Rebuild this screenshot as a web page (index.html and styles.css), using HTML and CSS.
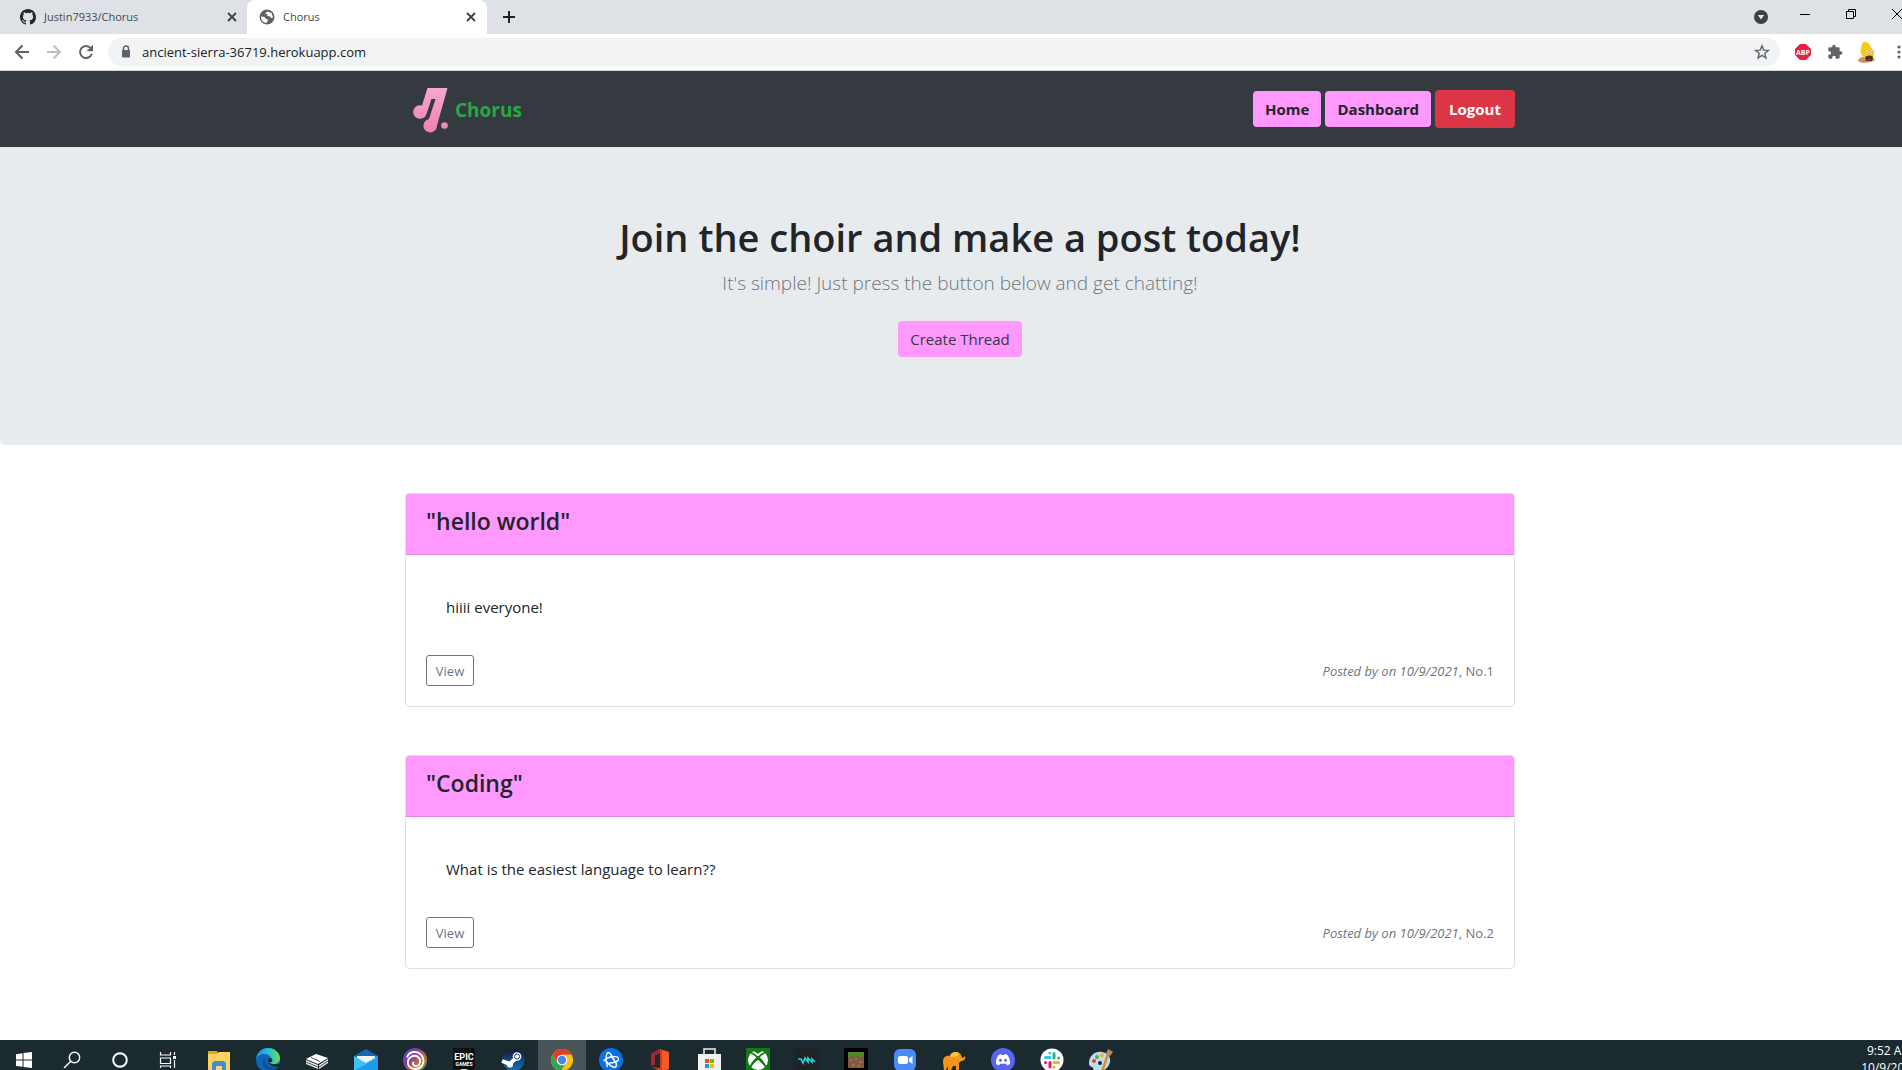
FILE: index.html
```html
<!DOCTYPE html>
<html lang="en">
<head>
<meta charset="utf-8">
<title>Chorus</title>
<link rel="stylesheet" href="styles.css">
</head>
<body>
<div class="screen">
  <div class="tabstrip">
    <div class="tab">
      <svg class="favicon" viewBox="0 0 16 16" fill="#24292e"><path d="M8 0C3.58 0 0 3.58 0 8c0 3.54 2.29 6.53 5.47 7.59.4.07.55-.17.55-.38 0-.19-.01-.82-.01-1.49-2.01.37-2.53-.49-2.69-.94-.09-.23-.48-.94-.82-1.13-.28-.15-.68-.52-.01-.53.63-.01 1.08.58 1.23.82.72 1.21 1.87.87 2.33.66.07-.52.28-.87.51-1.07-1.78-.2-3.64-.89-3.64-3.95 0-.87.31-1.59.82-2.15-.08-.2-.36-1.02.08-2.12 0 0 .67-.21 2.2.82a7.6 7.6 0 0 1 4 0c1.53-1.04 2.2-.82 2.2-.82.44 1.1.16 1.92.08 2.12.51.56.82 1.27.82 2.15 0 3.07-1.87 3.75-3.65 3.95.29.25.54.73.54 1.48 0 1.07-.01 1.93-.01 2.2 0 .21.15.46.55.38A8.01 8.01 0 0 0 16 8c0-4.42-3.58-8-8-8z"/></svg>
      <span class="tab-title">Justin7933/Chorus</span>
      <button class="icon-btn" aria-label="Close tab"><svg width="10" height="10" viewBox="0 0 10 10"><path d="M1 1l8 8M9 1L1 9" stroke="#3c4043" stroke-width="1.8"/></svg></button>
    </div>
    <div class="tab tab-active">
      <svg class="favicon" viewBox="0 0 16 16"><circle cx="8" cy="8" r="7.500" fill="#5f6368"/><path d="M8.500 2.500l4 1.500 1.500 4.500-2 .5-1-1.500-2.500-.5-.5-2-2-.5z" fill="#fff"/><path d="M2 7.500l3.500.5 1.500 2 2 .5-.5 2L7 14C4 13.500 2 11 2 7.500z" fill="#fff"/></svg>
      <span class="tab-title">Chorus</span>
      <button class="icon-btn" aria-label="Close tab"><svg width="10" height="10" viewBox="0 0 10 10"><path d="M1 1l8 8M9 1L1 9" stroke="#3c4043" stroke-width="1.8"/></svg></button>
    </div>
    <button class="icon-btn new-tab" aria-label="New tab"><svg width="12" height="12" viewBox="0 0 12 12"><path d="M6 0v12M0 6h12" stroke="#202124" stroke-width="2"/></svg></button>
    <div class="window-controls">
      <button class="icon-btn" aria-label="Search tabs"><svg width="14" height="14" viewBox="0 0 14 14"><circle cx="7" cy="7" r="7" fill="#3c4043"/><path d="M3.800 5h6.400L7 9.500z" fill="#e8eaed"/></svg></button>
      <button class="icon-btn" aria-label="Minimize"><svg width="10" height="10" viewBox="0 0 10 10"><path d="M0 5.500h10" stroke="#000"/></svg></button>
      <button class="icon-btn" aria-label="Restore"><svg width="10" height="10" viewBox="0 0 10 10" fill="none" stroke="#000"><path d="M.5 2.500h7v7h-7zM2.500 2.500v-2h7v7h-2"/></svg></button>
      <button class="icon-btn" aria-label="Close window"><svg width="10" height="10" viewBox="0 0 10 10"><path d="M0 0l10 10M10 0L0 10" stroke="#000"/></svg></button>
    </div>
  </div>

  <div class="toolbar">
    <button class="icon-btn" aria-label="Back"><svg width="16" height="16" viewBox="0 0 16 16" fill="none" stroke="#5f6368" stroke-width="2"><path d="M15 8H2M8.500 1.500L2 8l6.500 6.500"/></svg></button>
    <button class="icon-btn" aria-label="Forward"><svg width="16" height="16" viewBox="0 0 16 16" fill="none" stroke="#bdbec0" stroke-width="2"><path d="M1 8h13M7.500 1.500L14 8l-6.500 6.500"/></svg></button>
    <button class="icon-btn" aria-label="Reload"><svg width="16" height="16" viewBox="0 0 16 16"><path d="M13.800 9.700A6 6 0 1 1 12.700 4.200" fill="none" stroke="#5f6368" stroke-width="2"/><path d="M15 .8v6.400H8.600z" fill="#5f6368"/></svg></button>
    <div class="omnibox">
      <svg width="10" height="14" viewBox="0 0 10 14"><path d="M2.500 6V3.500a2.500 2.500 0 0 1 5 0V6" fill="none" stroke="#5f6368" stroke-width="1.500"/><rect x="1" y="5" width="8" height="7.500" rx="1" fill="#5f6368"/></svg>
      <input class="address" type="text" aria-label="Address" value="ancient-sierra-36719.herokuapp.com">
      <button class="icon-btn" aria-label="Bookmark"><svg width="16" height="16" viewBox="0 0 16 16"><path d="M8 1.800l1.700 4.300 4.700.3-3.600 3 1.200 4.600L8 11.400 4 14l1.200-4.600-3.600-3 4.700-.3z" fill="none" stroke="#5f6368" stroke-width="1.400"/></svg></button>
    </div>
    <div class="extensions">
      <button class="icon-btn" aria-label="Adblock Plus"><svg width="16" height="16" viewBox="0 0 16 16"><path d="M5 0h6l5 5v6l-5 5H5l-5-5V5z" fill="#ed1e45"/><text x="8" y="10.600" class="abp" text-anchor="middle">ABP</text></svg></button>
      <button class="icon-btn" aria-label="Extensions"><svg width="16" height="16" viewBox="0 0 24 24"><path d="M20.500 11H19V7a2 2 0 0 0-2-2h-4V3.500a2.500 2.500 0 0 0-5 0V5H4a2 2 0 0 0-2 2v3.800h1.500a2.700 2.700 0 0 1 0 5.400H2V20a2 2 0 0 0 2 2h3.800v-1.500a2.700 2.700 0 0 1 5.400 0V22H17a2 2 0 0 0 2-2v-4h1.500a2.500 2.500 0 0 0 0-5z" fill="#5f6368"/></svg></button>
      <button class="icon-btn" aria-label="Profile"><svg width="20" height="22" viewBox="0 0 20 22"><path d="M1 20c1-4 4-4 8-4s8 0 9 3c-4 3-14 4-17 1z" fill="#c98b6b"/><path d="M5 3c1-3 5-3 7 0l3 5c2 1 3 3 2 5l-1 3c-1 4-7 4-9 1l-3-4c-1-3 0-7 1-10z" fill="#fcc916"/><circle cx="10" cy="11" r="2.200" fill="#fff8c8" stroke="#b89a20" stroke-width=".5"/><circle cx="15" cy="11" r="2.200" fill="#fff8c8" stroke="#b89a20" stroke-width=".5"/><circle cx="10" cy="11" r=".6"/><circle cx="15" cy="11" r=".6"/><path d="M8 16c3-2 6-2 8 0l-1 4H9z" fill="#4a2c14"/><path d="M10 18h4v1.500h-4z" fill="#e02020"/></svg></button>
      <button class="icon-btn" aria-label="Menu"><svg width="4" height="14" viewBox="0 0 4 14" fill="#5f6368"><circle cx="2" cy="2" r="1.600"/><circle cx="2" cy="7" r="1.600"/><circle cx="2" cy="12" r="1.600"/></svg></button>
    </div>
  </div>

  <div class="page">
    <header class="navbar">
      <div class="container navbar-inner">
        <a class="brand" href="#">
          <svg width="38" height="46" viewBox="0 0 38 46"><defs><linearGradient id="note" x1="0" y1="0" x2="0" y2="1"><stop offset="0" stop-color="#f7a9cb"/><stop offset="1" stop-color="#f17fb4"/></linearGradient></defs><path d="M15.500 1H35.500L25 38.500A6.800 6.800 0 1 1 17 32.100L23.500 12H19.500L14.300 27.500A6.800 6.800 0 1 1 7.500 18.200L10 18.400z" fill="url(#note)"/><circle cx="32.500" cy="38.500" r="3.300" fill="#f48bbb"/></svg>
          <span>Chorus</span>
        </a>
        <nav class="nav-links">
          <a class="btn btn-pink" href="#">Home</a>
          <a class="btn btn-pink" href="#">Dashboard</a>
          <button class="btn btn-danger">Logout</button>
        </nav>
      </div>
    </header>

    <section class="hero">
      <h1>Join the choir and make a post today!</h1>
      <p>It's simple! Just press the button below and get chatting!</p>
      <button class="btn btn-create">Create Thread</button>
    </section>

    <main class="container posts">
      <article class="card">
        <h2>"hello world"</h2>
        <div class="card-body">
          <p class="card-text">hiiii everyone!</p>
          <div class="card-foot">
            <button class="btn-view">View</button>
            <small><em>Posted by on 10/9/2021</em>, No.1</small>
          </div>
        </div>
      </article>
      <article class="card">
        <h2>"Coding"</h2>
        <div class="card-body">
          <p class="card-text">What is the easiest language to learn??</p>
          <div class="card-foot">
            <button class="btn-view">View</button>
            <small><em>Posted by on 10/9/2021</em>, No.2</small>
          </div>
        </div>
      </article>
    </main>
  </div>

  <footer class="taskbar">
    <div class="system-apps">
      <button class="app" aria-label="Start"><svg viewBox="0 0 24 24" fill="#fff"><path d="M4 6.300l6.500-1v6.300H4zM11.500 5.100L20 4v7.600h-8.500zM4 12.600h6.500v6.200L4 17.900zM11.500 12.600H20V20l-8.500-1z"/></svg></button>
      <button class="app" aria-label="Search"><svg viewBox="0 0 24 24" fill="none" stroke="#fff" stroke-width="1.400"><circle cx="14.500" cy="9.500" r="5.200"/><path d="M10.800 13.200L4 20"/></svg></button>
      <button class="app" aria-label="Cortana"><svg viewBox="0 0 24 24" fill="none" stroke="#fff" stroke-width="2"><circle cx="12" cy="12" r="6.800"/></svg></button>
      <button class="app" aria-label="Task view"><svg viewBox="0 0 24 24" fill="none" stroke="#fff" stroke-width="1.200"><path d="M4.500 4v3h10V4M4.500 10h10v5.500h-10zM4.500 20v-2h10v2M18.500 4v3M18.500 12v8"/><path d="M17 8h3v3h-3z" fill="#fff" stroke="none"/></svg></button>
    </div>
    <div class="pinned-apps">
      <button class="app" aria-label="File Explorer"><svg viewBox="0 0 24 24"><path d="M1 3h9l1 2h12v17H1z" fill="#e6a50c"/><path d="M1 6h9l2-2h11v18H1z" fill="#ffd45e"/><path d="M5 22v-7l2-2h10l2 2v7h-4v-4H9v4z" fill="#3a8fd6"/></svg></button>
      <button class="app" aria-label="Edge"><svg viewBox="0 0 24 24"><defs><linearGradient id="edge"><stop offset="0" stop-color="#1b8fdc"/><stop offset=".55" stop-color="#2bc3d2"/><stop offset="1" stop-color="#6bdc50"/></linearGradient></defs><circle cx="12" cy="12" r="12" fill="#0f65b8"/><path d="M0 11C1 4 6 0 12 0c7 0 12 5 12 10 0 4-3 6-6 6-4 0-4-1-4-2 1-1 1-2 1-3 0-3-3-5-6-5-4 0-8 2-9 5z" fill="url(#edge)"/><path d="M9 9c-4 3-3 12 5 14 4 0 7-2 9-5-5 3-14 1-14-9z" fill="#154f9f"/><path d="M14 14c0 2 2 2 4 2h6v2c-4 2-11 0-12-5 0-2 1-3 2-3 2 0 3 2 2 4z" fill="#1b2a2f"/></svg></button>
      <button class="app" aria-label="3D app"><svg viewBox="0 0 24 24"><path d="M1 11l10-5 12 4-10 6z" fill="#fff"/><path d="M1 12l12 5v4L1 16zM14 17l9-6v4l-9 6z" fill="#e8eaea"/><path d="M6 9.500l9 4M1 14l12 5M14 19l9-6" stroke="#1b2a2f" fill="none" stroke-width=".8"/></svg></button>
      <button class="app" aria-label="Mail"><svg viewBox="0 0 24 24"><path d="M0 8l12-7 12 7v4H0z" fill="#1467b8"/><path d="M3 8h18v8H3z" fill="#f2f4f5"/><path d="M0 8l12 7 12-7v15H0z" fill="#3ec2f4"/><path d="M0 23L24 9v14z" fill="#1d9ae8"/></svg></button>
      <button class="app" aria-label="Ubisoft Connect"><svg viewBox="0 0 24 24"><defs><linearGradient id="ubi" x2="1" y2="1"><stop offset="0" stop-color="#3f5fd0"/><stop offset=".35" stop-color="#813b9b"/><stop offset=".65" stop-color="#c76f36"/><stop offset="1" stop-color="#34a872"/></linearGradient></defs><circle cx="12" cy="12" r="12" fill="url(#ubi)"/><g fill="none" stroke="#fff" stroke-width="1.900"><path d="M4 9.500C6 3 15 2 19 8c4 7-1 13-7 13-5 0-8-4-7-8s6-7 10-4 2 9-2 9c-3 0-4-3-2-4"/></g></svg></button>
      <button class="app" aria-label="Epic Games"><svg viewBox="0 0 24 24"><path d="M1 0h22v21l-11 4-11-4z" fill="#111"/><text x="12" y="12" class="epic" text-anchor="middle">EPIC</text><text x="12" y="18" class="epic-sub" text-anchor="middle">GAMES</text><path d="M8 21h8l-4 2z" fill="#ddd"/></svg></button>
      <button class="app" aria-label="Steam"><svg viewBox="0 0 24 24"><defs><linearGradient id="steam" x2="0" y2="1"><stop offset="0" stop-color="#13183c"/><stop offset="1" stop-color="#1277b8"/></linearGradient></defs><circle cx="12.500" cy="12" r="11" fill="url(#steam)"/><path d="M1 13l8 3 6-6" stroke="#fff" stroke-width="4" fill="none"/><circle cx="16" cy="8.500" r="4.300" fill="#fff"/><circle cx="16" cy="8.500" r="2.600" fill="none" stroke="#1a3768"/><circle cx="9" cy="16.500" r="3" fill="#fff"/></svg></button>
      <button class="app app-current" aria-label="Chrome"><svg viewBox="0 0 24 24"><circle cx="12" cy="12" r="11" fill="#fbc116"/><path d="M12 12L2.500 6.500A11 11 0 0 1 21.500 6.500H12z" fill="#e33b2e"/><path d="M2.500 6.500A11 11 0 0 0 11 23l5-8.700-8.700.6z" fill="#2da94f"/><path d="M2.500 6.500L7 14.500 12 7h9.800z" fill="#e33b2e"/><circle cx="12" cy="12" r="5.300" fill="#fff"/><circle cx="12" cy="12" r="4.200" fill="#4285f4"/></svg></button>
      <button class="app" aria-label="Battle.net"><svg viewBox="0 0 24 24"><circle cx="12" cy="12" r="12" fill="#0a72e8"/><g fill="none" stroke="#fff" stroke-width="1.400"><path d="M8.500 19C6 13 7 4 9.500 4.500S15 11 16 15"/><path d="M4.500 13C9 8 19 7.500 19.500 10.500S15 15 10 15"/><path d="M11 8c4 3 8 8 6 10.500S10 17 7 13"/></g></svg></button>
      <button class="app" aria-label="Office"><svg viewBox="0 0 24 24"><path d="M3 6l9-5 9 3v17l-9 2-9-4 9 1V5L7 7v9l-4 2z" fill="#d83b18"/><path d="M3 6l9-5v4L7 7v9l-4 2z" fill="#a92236"/><path d="M14 2l7 2v17l-7 2z" fill="#f35b24"/></svg></button>
      <button class="app" aria-label="Microsoft Store"><svg viewBox="0 0 24 24"><path d="M7 8V1h11v7" fill="none" stroke="#f2f2f2" stroke-width="1.500"/><path d="M1 6h23v18H1z" fill="#f2f2f2"/><path d="M8 11h4v4H8z" fill="#f25022"/><path d="M13 11h4v4h-4z" fill="#7fba00"/><path d="M8 16h4v4H8z" fill="#00a4ef"/><path d="M13 16h4v4h-4z" fill="#ffb900"/></svg></button>
      <button class="app" aria-label="Xbox"><svg viewBox="0 0 24 24"><path d="M0 0h24v24H0z" fill="#107c10"/><circle cx="12" cy="12" r="10" fill="#fff"/><path d="M6 3c3 0 6 3 6 3s3-3 6-3c-4-2-8-2-12 0zM4 19c1-6 8-11 8-11s7 5 8 11c-1-1-5-5-8-7-3 2-7 6-8 7z" fill="#107c10"/><path d="M5 4.500c4 2 12 9 15 15M19 4.500c-4 2-12 9-15 15" fill="none" stroke="#107c10" stroke-width="1.800"/></svg></button>
      <button class="app" aria-label="Voicemod"><svg viewBox="0 0 24 24"><path d="M0 0h24v24H0z" fill="#202226"/><path d="M3 11h3l2 4 2-5 3 4v-4l4 4v-3l3 3" fill="none" stroke="#23d3d7" stroke-width="1.700"/></svg></button>
      <button class="app" aria-label="Minecraft"><svg viewBox="0 0 24 24"><path d="M0 0h24v24H0z"/><path d="M4 4h16v16H4z" fill="#805a3e"/><path d="M4 4h16v4h-2v1h-3V7h-2v2H9V7H7v2H4z" fill="#4f8a2e"/><path d="M6 11h2v2H6zM11 10h2v2h-2zM15 13h3v2h-3zM8 16h3v2H8zM14 17h2v2h-2z" fill="#a2734e"/></svg></button>
      <button class="app" aria-label="Zoom"><svg viewBox="0 0 24 24"><rect x="1" y="1" width="22" height="22" rx="6" fill="#4a8cf7"/><rect x="5" y="8" width="10" height="8" rx="2" fill="#fff"/><path d="M16 10.500L19.500 8v8L16 13.500z" fill="#fff"/></svg></button>
      <button class="app" aria-label="Elephant app"><svg viewBox="0 0 24 24"><path d="M1 14c0-5 3-7 7-6 1-4 6-5 9-3 3 1 2 5 4 5l2-2c1 3-1 5-4 5l-2 2v7h-3v-4h-3l-2 4H6v-4l-2 4H2z" fill="#f7941d"/><path d="M8 8c1-4 6-5 9-3-1 4-5 6-9 3z" fill="#ffc233"/></svg></button>
      <button class="app" aria-label="Discord"><svg viewBox="0 0 24 24"><circle cx="12" cy="12" r="12" fill="#5865f2"/><path d="M7.500 7l2.500-1 .7 1h2.600l.7-1 2.500 1c2 3 3 6 2.500 9l-3 1.500-1-1.700H9l-1 1.700L5 16c-.5-3 .5-6 2.500-9z" fill="#fff"/><circle cx="9.500" cy="12.300" r="1.500" fill="#5865f2"/><circle cx="14.500" cy="12.300" r="1.500" fill="#5865f2"/></svg></button>
      <button class="app" aria-label="Slack"><svg viewBox="0 0 24 24"><circle cx="12" cy="12" r="11.500" fill="#fff"/><g stroke-width="3" stroke-linecap="round"><path d="M5.500 9.500H10M9.800 5v.1" stroke="#36c5f0"/><path d="M14 5.500V10M18.500 10h.1" stroke="#2eb67d"/><path d="M14 14.500h4.500M14 19v-.1" stroke="#ecb22e"/><path d="M10 14.500V19M5.500 14.500h.1" stroke="#e01e5a"/></g></svg></button>
      <button class="app" aria-label="Paint"><svg viewBox="0 0 24 24"><path d="M0 15C0 8 6 3 13 4c6 1 9 5 8 10-1 6-8 11-14 10-3 0-2-4-4-5s-3-1-3-4z" fill="#bcdcf0"/><circle cx="5" cy="13" r="2" fill="#d9472b"/><circle cx="8" cy="9" r="2" fill="#4fae4a"/><circle cx="13" cy="7.500" r="2" fill="#f2b632"/><circle cx="11" cy="15" r="2" fill="#1b2a2f"/><path d="M13 24L19 6" stroke="#e58a2b" stroke-width="2.500"/><path d="M17 6l2-5 5 3-3 4z" fill="#b78b62"/></svg></button>
    </div>
    <div class="clock"><span>9:52 AM</span><span>10/9/2021</span></div>
  </footer>
</div>
</body>
</html>
```
FILE: styles.css
```css
* { box-sizing: border-box; }

body {
  margin: 0;
  overflow: hidden;
  background: #fff;
  color: #212529;
  font-family: "Open Sans", "Noto Sans", sans-serif;
  font-size: 15px;
  line-height: 24px;
}

button, input { font: inherit; color: inherit; }

/* The desktop runs slightly past the right and bottom of the window */
.screen {
  display: flex;
  flex-direction: column;
  height: calc(100vh + 10px);
  margin-right: -18px;
}

.icon-btn {
  display: flex;
  align-items: center;
  justify-content: center;
  width: 16px;
  height: 28px;
  padding: 0;
  border: 0;
  background: none;
}
.icon-btn svg { flex: none; }

/* Browser chrome */
.tabstrip {
  display: flex;
  height: 34px;
  background: #dee1e6;
}
.tab {
  display: flex;
  align-items: center;
  gap: 8px;
  width: 247px;
  padding: 0 7px 0 20px;
  color: #45494d;
  font-size: 11px;
}
.tab-active {
  width: 240px;
  padding-right: 8px;
  padding-left: 12px;
  border-radius: 8px 8px 0 0;
  background: #fff;
}
.favicon { width: 16px; height: 16px; flex: none; }
.tab-title { flex: 1; }
.new-tab { height: 34px; margin-left: 14px; }
.window-controls {
  display: flex;
  gap: 30px;
  margin-left: auto;
  padding-right: 15px;
}
.window-controls .icon-btn:first-child { height: 34px; margin-right: -2px; }

.toolbar {
  display: flex;
  align-items: center;
  gap: 15px;
  height: 37px;
  padding: 0 13px 0 14px;
  border-bottom: 1px solid #d5d8dc;
}
.toolbar > .icon-btn { margin-right: 1px; }
.omnibox {
  display: flex;
  flex: 1;
  align-items: center;
  gap: 11px;
  height: 28px;
  margin-left: -2px;
  padding: 0 10px 0 13px;
  border-radius: 14px;
  background: #f1f3f4;
}
.address {
  flex: 1;
  padding: 0;
  border: 0;
  background: none;
  color: #202124;
  font-size: 13px;
}
.extensions { display: flex; gap: 16px; }
.abp { fill: #fff; font: 700 7px "Open Sans", sans-serif; }

/* Site */
.page { flex: 1; overflow: hidden; }
.container { width: 100%; max-width: 1110px; margin: 0 auto; }

.navbar { background: #343a40; }
.navbar-inner {
  display: flex;
  align-items: center;
  justify-content: space-between;
  height: 76px;
}
.brand {
  display: flex;
  align-items: center;
  gap: 5px;
  padding: 2px 0 0 7px;
  color: #28a745;
  font-size: 19px;
  font-weight: 700;
  text-decoration: none;
}
.nav-links { display: flex; align-items: center; gap: 4px; }
.btn {
  padding: 6px 12px;
  border: 0;
  border-radius: 4px;
  color: #212529;
  text-decoration: none;
}
.btn-pink, .btn-danger { font-weight: 700; }
.btn-pink, .btn-create { background: #f9f; }
.btn-danger { padding: 7px 14px; background: #dc3545; color: #fff; }
.btn-create { color: #343a40; }

.hero {
  padding: 66px 0 88px;
  border-radius: 0 0 5px 5px;
  background: #e8ebee;
  text-align: center;
}
.hero h1 {
  margin: 0 0 7px;
  font-size: 38px;
  font-weight: 600;
  line-height: 48px;
}
.hero p {
  margin: 0 0 23px;
  color: #6c757d;
  font-size: 19px;
  font-weight: 300;
  line-height: 30px;
}

.posts {
  display: flex;
  flex-direction: column;
  gap: 48px;
  padding-top: 48px;
}
.card {
  overflow: hidden;
  border: 1px solid #dfdfdf;
  border-radius: 4px;
}
.card h2 {
  margin: 0;
  padding: 13px 20px 18px;
  border-bottom: 1px solid #df86df;
  background: #f9f;
  font-size: 23px;
  font-weight: 600;
  line-height: 29px;
}
.card-body { padding: 20px; }
.card-text { margin: 0; padding: 20px 20px 36px; }
.card-foot {
  display: flex;
  align-items: center;
  justify-content: space-between;
  color: #6c757d;
  font-size: 13px;
}
.btn-view {
  min-width: 48px;
  height: 31px;
  padding: 0 8px;
  border: 1px solid #6c757d;
  border-radius: 3px;
  background: none;
}
.card-foot small { font-size: 13px; }

/* Desktop taskbar */
.taskbar {
  display: flex;
  height: 40px;
  background: #1b2a2f;
}
.system-apps { display: flex; margin-right: 3px; }
.pinned-apps { display: flex; gap: 1px; }
.app {
  display: flex;
  align-items: center;
  justify-content: center;
  width: 48px;
  height: 40px;
  padding: 0;
  border: 0;
  background: none;
}
.app svg { width: 24px; height: 24px; }
.app-current { background: #4a5558; }
.epic { fill: #fff; font: 700 9px "Roboto", sans-serif; }
.epic-sub { fill: #fff; font: 700 5px "Roboto", sans-serif; }
.clock {
  display: flex;
  flex-direction: column;
  align-items: center;
  margin-left: auto;
  padding: 2px 2px 0 0;
  color: #fff;
  font-size: 12px;
  line-height: 17px;
}
```
